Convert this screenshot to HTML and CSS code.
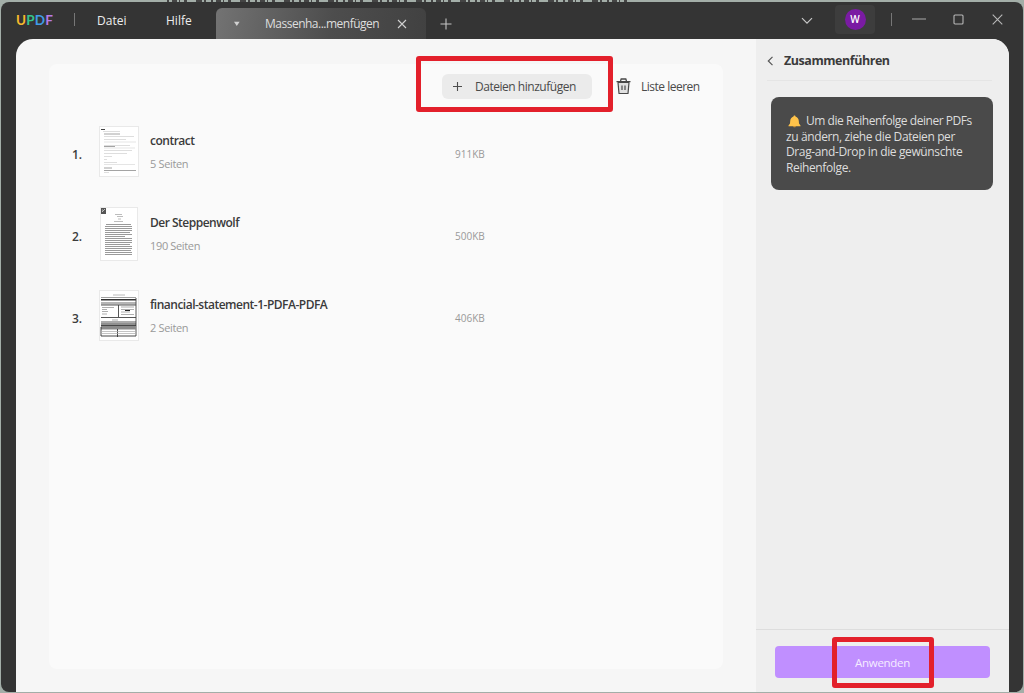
FILE: index.html
```
<!DOCTYPE html>
<html lang="de">
<head>
  <meta charset="UTF-8" />
  <meta name="viewport" content="width=device-width, initial-scale=1.0"/>
  <title>UPDF | Zusammenführen</title>
  <link rel="stylesheet" href="styles.css">
</head>
<body>
  <div class="window">
    <header class="titlebar">
      <div class="logo"><span class="u">U</span><span class="p">P</span><span class="d">D</span><span class="f">F</span></div>
      <span class="sep"></span>
      <nav class="menu">
        <a class="menu-file">Datei</a>
        <a class="menu-help">Hilfe</a>
      </nav>
      <div class="tab">
        <svg class="tab-arrow" width="8" height="6" viewBox="0 0 8 6"><path d="M1 .8h5.6L3.8 5z" fill="#d2d2d2"/></svg>
        <span class="tab-title">Massenha...menfügen</span>
        <svg width="10" height="10" viewBox="0 0 10 10"><path d="M1 1l8 8M9 1L1 9" stroke="#d0d0d0" stroke-width="1.1"/></svg>
      </div>
      <svg class="new-tab" width="12" height="12" viewBox="0 0 12 12"><path d="M6 .5v11M.5 6h11" stroke="#c4c4c4" stroke-width="1.1"/></svg>
      <div class="controls">
        <svg class="chevron" width="12" height="8" viewBox="0 0 12 8"><path d="M1 1.2l5 5 5-5" fill="none" stroke="#c8c8c8" stroke-width="1.2"/></svg>
        <div class="user"><span class="avatar">W</span></div>
        <span class="sep sep-right"></span>
        <svg class="minimize" width="14" height="10" viewBox="0 0 14 10"><path d="M0 5h14" stroke="#a9a9a9" stroke-width="1.1"/></svg>
        <svg class="maximize" width="11" height="11" viewBox="0 0 11 11"><rect x="1" y="1" width="9" height="9" rx="1" fill="none" stroke="#b8b8b8" stroke-width="1.1"/></svg>
        <svg class="close" width="11" height="11" viewBox="0 0 11 11"><path d="M.7.7l9.6 9.6M10.3.7L.7 10.3" stroke="#b8b8b8" stroke-width="1.1"/></svg>
      </div>
    </header>

    <div class="content">
      <main class="main">
        <section class="panel">
          <div class="toolbar">
            <button class="add-btn">
              <svg width="9" height="9" viewBox="0 0 9 9"><path d="M4.5 0v9M0 4.5h9" stroke="#4d4d4d" stroke-width="1.1"/></svg>
              <span class="add-label">Dateien hinzufügen</span>
            </button>
            <svg class="trash" width="15" height="17" viewBox="0 0 15 17">
              <path d="M2 4.5l1 11h9l1-11z" fill="#e0e0e0" stroke="#484848" stroke-width="1.2" stroke-linejoin="round"/>
              <path d="M.5 3.6h14M4.5 3l.7-2h4.6l.7 2" fill="none" stroke="#484848" stroke-width="1.3"/>
              <path d="M6 7.5v4.500M9 7.5v4.500" stroke="#555" stroke-width="1.3"/>
            </svg>
            <span class="clear-label">Liste leeren</span>
          </div>

          <ul class="files">
            <li class="file">
              <span class="num">1.</span>
              <svg class="thumb" width="41" height="54" viewBox="0 0 41 54">
                <rect x=".5" y="1.5" width="39" height="50" fill="#fff" stroke="#e9e9e9"/>
                <path d="M2 4.5h4" stroke="#444" stroke-width="1"/>
                <path d="M4 6.5h17M5 11.5h30M5 14.5h22M5 20.5h26M5 25.5h28M5 28.5h23M5 31.5h8M5 34.5h3M5 37.5h13M5 47.5h5" stroke="#d6d6d6" stroke-width=".8"/>
                <path d="M5 9h16M5 21.5h11M5 43h8M5 45.5h32" stroke="#9a9a9a" stroke-width=".9"/>
                <path d="M5 17h32M5 23h31M5 39.5h31" stroke="#dedede" stroke-width=".8"/>
              </svg>
              <div class="info">
                <h2>contract</h2>
                <p>5 Seiten</p>
              </div>
              <span class="size">911KB</span>
            </li>
            <li class="file">
              <span class="num">2.</span>
              <svg class="thumb" width="41" height="54" viewBox="0 0 41 54">
                <rect x="1.5" y=".5" width="37" height="53" fill="#fff" stroke="#e9e9e9"/>
                <rect x="2" y="1" width="5" height="6" fill="#555"/>
                <path d="M3 5l3-3M3 3h1" stroke="#ddd" stroke-width=".8"/>
                <path d="M16 7.5h7M18 9.5h6M19 12h3M15 14.5h9" stroke="#b5b5b5" stroke-width=".9"/>
                <path d="M7 17.500h25M6 19.500h27M6 21.500h27M6 23.500h27M6 25.500h25M6 27.500h27M6 29.500h20M6 31.500h27M6 33.500h27M6 35.500h27M6 37.500h25M6 39.500h27M6 41.500h27M6 43.500h26M6 45.500h27M6 47.500h27" stroke="#9a9a9a" stroke-width="1"/>
              </svg>
              <div class="info">
                <h2>Der Steppenwolf</h2>
                <p>190 Seiten</p>
              </div>
              <span class="size">500KB</span>
            </li>
            <li class="file">
              <span class="num">3.</span>
              <svg class="thumb" width="41" height="54" viewBox="0 0 41 54">
                <rect x=".5" y="1.5" width="39" height="50" fill="#fff" stroke="#e9e9e9"/>
                <path d="M14 6h12" stroke="#aaa" stroke-width=".8"/>
                <path d="M2 8.5h35" stroke="#888" stroke-width=".8"/>
                <rect x="2" y="10" width="35" height="1.500" fill="#333"/>
                <rect x="2" y="13" width="35" height="2.5" fill="#b5b5b5"/>
                <path d="M2 16h35M19.500 16v12M2 28.5h35M2 33h35M37 9v38" stroke="#444" stroke-width=".9"/>
                <path d="M3 18.5h12M3 20.5h5M3 22.5h6M3 25h5M22 18h13M22 20.5h13M22 23h9M22 25.5h13M13 31h6" stroke="#999" stroke-width=".8"/>
                <path d="M26 21.5h5M2 35h35" stroke="#222" stroke-width="1.2"/>
                <rect x="2" y="37" width="35" height="3.5" fill="#8a8a8a"/>
                <path d="M2 36.5h35M2 47h35M18.5 40v8M2 38v9" stroke="#333" stroke-width=".9"/>
                <path d="M2 42.5h35M2 44.5h35" stroke="#aaa" stroke-width=".7"/>
              </svg>
              <div class="info">
                <h2>financial-statement-1-PDFA-PDFA</h2>
                <p>2 Seiten</p>
              </div>
              <span class="size">406KB</span>
            </li>
          </ul>
        </section>
      </main>

      <aside class="sidebar">
        <div class="side-head">
          <svg width="7" height="10" viewBox="0 0 7 10"><path d="M5.5 .8L1.3 5l4.2 4.2" fill="none" stroke="#555" stroke-width="1.2"/></svg>
          <h1>Zusammenführen</h1>
        </div>
        <div class="tip">
          <svg class="bell" width="13" height="13" viewBox="0 0 13 13">
            <path d="M6.5 .5c-.7 0-1 .5-1 1C3.5 2.1 2.300 3.800 2.200 6L2 8.500.5 10.500v.7h12v-.7L11 8.500 10.800 6c-.1-2.200-1.300-3.900-3.300-4.500 0-.5-.3-1-1-1z" fill="#ffc34a"/>
            <path d="M5 11.200h3l-.7 1H5.700z" fill="#e8a02e"/>
          </svg>
          <p class="first">Um die Reihenfolge deiner PDFs</p>
          <p>zu ändern, ziehe die Dateien per</p>
          <p>Drag-and-Drop in die gewünschte</p>
          <p>Reihenfolge.</p>
        </div>
        <div class="side-foot">
          <button class="apply-btn">Anwenden</button>
        </div>
      </aside>
    </div>
  </div>

  <svg class="backdrop-text" width="470" height="2"><path d="M2 1h464" stroke="#444" stroke-width="2" stroke-dasharray="2 3 5 2 1 4 3 9 6 2 2 5"/></svg>
  <div class="mark mark-add"></div>
  <div class="mark mark-apply"></div>
</body>
</html>
```
FILE: styles.css
```
:root {
  --bar: #343434;
  --text: #3b3b3b;
  --muted: #999;
  --purple: #c08fff;
  --mark: #e3202b;
}
*, *::before, *::after { box-sizing: border-box; margin: 0; padding: 0; }
body { width:1024px; height:693px; overflow:hidden; padding:2px 1px 1px 1px; background:#a3aea8; font-family:"Open Sans","Noto Sans",sans-serif; font-size:12px; color:var(--text); }
button { border:none; font-family:inherit; }
svg { display:block; flex:none; }
.window { height:690px; background:var(--bar); border-radius:8px; overflow:hidden; }

/* Title bar */
.titlebar { display:flex; height:37px; white-space:nowrap; }
.logo { width:58px; padding:8px 0 0 15px; font:700 13.5px/20px Lato,sans-serif; letter-spacing:.2px; }
.u { color:#f5b92c; }
.p { color:#35c48c; }
.d { color:#3f9be6; }
.f { color:#b67ce8; }
.sep { width:1px; height:13px; margin:11px 0 0 15px; background:#777; }
.menu { display:flex; width:141px; padding-top:10px; line-height:18px; color:#ededed; }
.menu-file { width:69px; margin-left:22px; }
.tab { display:flex; width:210px; height:31px; margin-top:6px; padding:11px 0 0 17px; background:linear-gradient(100deg,#737373,#4d4d4d 55%,#414141); border-radius:6px 6px 0 0; color:#dedede; }
.tab-arrow { margin-top:2px; }
.tab-title { width:156px; margin-top:-4px; padding-left:24px; line-height:18px; letter-spacing:-.5px; }
.new-tab { margin:16px 0 0 14px; }
.controls { display:flex; margin-left:349px; }
.chevron { margin-top:15px; }
.user { display:flex; align-items:center; justify-content:center; width:40px; height:29px; margin:3px 0 0 22px; background:#3d3d3d; border-radius:4px; }
.avatar { width:21px; height:21px; border-radius:50%; background:#7a1ba3; color:#fff; font-size:10px; font-weight:600; line-height:21px; text-align:center; }
.sep-right { margin-left:16px; }
.minimize { margin:12px 0 0 20px; }
.maximize { margin:12px 0 0 27px; }
.close { margin:12px 0 0 28px; }

/* Content */
.content { display:flex; width:993px; height:653px; margin-left:15px; background:#f6f6f6; border-radius:17px 17px 0 0; overflow:hidden; }
.main { width:740px; padding:25px 0 0 33px; }
.panel { width:674px; height:605px; background:#fafafa; border-radius:8px; }
.toolbar { display:flex; height:45px; padding:10px 0 0 393px; white-space:nowrap; }
.add-btn { display:flex; width:150px; height:25px; padding:8px 0 0 11px; background:#ebebeb; border-radius:6px; font-size:12px; color:#4a4a4a; }
.add-label { margin:-4px 0 0 13px; line-height:17px; letter-spacing:-.47px; }
.trash { margin:4px 0 0 24px; }
.clear-label { margin:4px 0 0 10px; line-height:17px; letter-spacing:-.5px; color:#4a4a4a; }
.files { list-style:none; padding-top:15px; }
.file { display:flex; height:82px; white-space:nowrap; }
.num { width:50px; padding:22px 0 0 23px; font-size:12px; font-weight:600; line-height:17px; }
.thumb { margin-top:1px; }
.info { width:315px; padding-left:10px; }
.info h2 { margin-top:8px; font-size:12px; font-weight:600; line-height:17px; letter-spacing:-.5px; }
.info p { margin-top:6px; font-size:11px; line-height:17px; letter-spacing:-.35px; color:var(--muted); }
.size { margin-top:22px; font-size:10px; line-height:17px; color:var(--muted); }

/* Sidebar */
.sidebar { display:flex; flex-direction:column; width:253px; background:#eee; }
.side-head { display:flex; align-items:center; gap:10px; height:42px; margin:0 17px 16px 11px; padding-top:2px; border-bottom:1px solid #e5e5e5; }
.side-head h1 { font-size:12.5px; font-weight:700; letter-spacing:-.45px; }
.tip { position:relative; width:222px; height:93px; margin-left:15px; padding:16px 0 0 15px; background:#4a4a4a; border-radius:8px; color:#ddd; white-space:nowrap; }
.tip p { line-height:15.6px; letter-spacing:-.38px; }
.tip .first { padding-left:20px; letter-spacing:-.46px; }
.bell { position:absolute; left:17px; top:18px; }
.side-foot { height:63px; margin-top:auto; padding:16px 0 0 19px; border-top:1px solid #ddd; }
.apply-btn { width:215px; height:32px; background:var(--purple); border-radius:4px; font-size:11.5px; letter-spacing:-.3px; color:#f5ecff; }

/* Highlight frames */
.mark { position:absolute; border:5px solid var(--mark); border-radius:3px; }
.mark-add { left:416px; top:56px; width:197px; height:56px; }
.mark-apply { left:832px; top:637px; width:102px; height:51px; }
.backdrop-text { position:absolute; left:165px; top:0; }
```
